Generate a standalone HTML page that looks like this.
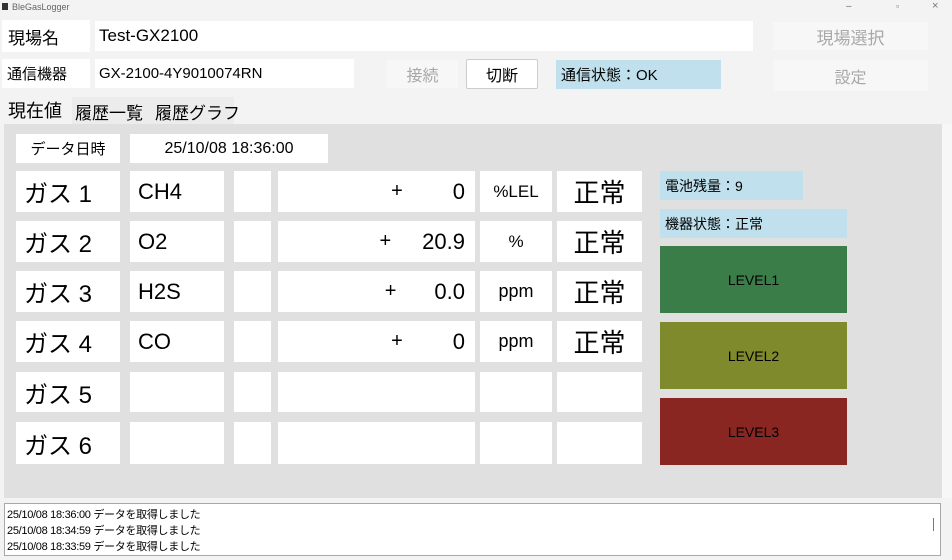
<!DOCTYPE html>
<html><head><meta charset="utf-8"><style>
*{margin:0;padding:0;box-sizing:border-box}
body{width:952px;height:560px;background:#f3f3f3;position:relative;overflow:hidden;font-family:"Liberation Sans","Noto Sans CJK JP",sans-serif;color:#000}
.a{position:absolute;display:flex;align-items:center;white-space:nowrap}
.w{background:#fff}
.c{justify-content:center}
.r{justify-content:flex-end}
.b{background:#bfe0ec}
</style></head><body>
<div class="a" style="left:0;top:0;height:13px;font-size:9px;color:#666"><span style="display:inline-block;width:6px;height:7px;background:#333;margin:0 4px 0 2px"></span>BleGasLogger</div>
<div class="a" style="left:846px;top:0;height:12px;font-size:10px;color:#777">–</div>
<div class="a" style="left:896px;top:0;height:12px;font-size:9px;color:#777">▫</div>
<div class="a" style="left:932px;top:0;height:12px;font-size:11px;color:#777">×</div>

<div class="a w" style="left:2px;top:20px;width:88px;height:32px;font-size:17px;padding-left:6px">現場名</div>
<div class="a w" style="left:95px;top:21px;width:658px;height:30px;font-size:17px;padding-left:4px">Test-GX2100</div>
<div class="a c" style="left:773px;top:22px;width:155px;height:28px;font-size:17px;color:#a8a8a8;background:#f7f7f7">現場選択</div>

<div class="a w" style="left:2px;top:59px;width:88px;height:29px;font-size:15px;padding-left:5px">通信機器</div>
<div class="a w" style="left:95px;top:59px;width:259px;height:29px;font-size:15px;padding-left:4px">GX-2100-4Y9010074RN</div>
<div class="a c" style="left:387px;top:60px;width:71px;height:28px;font-size:16px;color:#a8a8a8;background:#f7f7f7">接続</div>
<div class="a c w" style="left:466px;top:59px;width:72px;height:30px;font-size:16px;border:1px solid #ccc;border-radius:2px">切断</div>
<div class="a b" style="left:556px;top:60px;width:165px;height:29px;font-size:15px;padding-left:5px">通信状態：OK</div>
<div class="a c" style="left:773px;top:60px;width:155px;height:31px;font-size:16px;color:#a8a8a8;background:#f7f7f7">設定</div>

<div class="a" style="left:2px;top:95px;width:70px;height:30px;font-size:18px;padding-left:6px;background:#f3f3f3">現在値</div>
<div class="a" style="left:72px;top:97px;width:80px;height:28px;font-size:17px;padding-left:3px;background:#ececec">履歴一覧</div>
<div class="a" style="left:152px;top:97px;width:82px;height:28px;font-size:17px;padding-left:3px;background:#ececec">履歴グラフ</div>

<div style="position:absolute;left:4px;top:124px;width:938px;height:374px;background:#e0e0e0"></div>
<div style="position:absolute;left:942px;top:124px;width:10px;height:374px;background:#f7f7f7"></div>

<div class="a w c" style="left:16px;top:134px;width:104px;height:29px;font-size:15px">データ日時</div>
<div class="a w c" style="left:130px;top:134px;width:198px;height:29px;font-size:16px">25/10/08 18:36:00</div>

<div class="a w" style="left:16px;top:171px;width:104px;height:41px;font-size:24px;padding-left:8px">ガス 1</div>
<div class="a w" style="left:130px;top:171px;width:94px;height:41px;font-size:22px;padding-left:8px">CH4</div>
<div class="a w" style="left:234px;top:171px;width:37px;height:41px"></div>
<div class="a w r" style="left:278px;top:171px;width:197px;height:41px;font-size:22px;padding-right:10px"><span style="margin-right:50px;font-size:20px">+</span>0</div>
<div class="a w c" style="left:480px;top:171px;width:72px;height:41px;font-size:17px">%LEL</div>
<div class="a w c" style="left:557px;top:171px;width:85px;height:41px;font-size:26px">正常</div>

<div class="a w" style="left:16px;top:221px;width:104px;height:41px;font-size:24px;padding-left:8px">ガス 2</div>
<div class="a w" style="left:130px;top:221px;width:94px;height:41px;font-size:22px;padding-left:8px">O2</div>
<div class="a w" style="left:234px;top:221px;width:37px;height:41px"></div>
<div class="a w r" style="left:278px;top:221px;width:197px;height:41px;font-size:22px;padding-right:10px"><span style="margin-right:31px;font-size:20px">+</span>20.9</div>
<div class="a w c" style="left:480px;top:221px;width:72px;height:41px;font-size:17px">%</div>
<div class="a w c" style="left:557px;top:221px;width:85px;height:41px;font-size:26px">正常</div>

<div class="a w" style="left:16px;top:271px;width:104px;height:41px;font-size:24px;padding-left:8px">ガス 3</div>
<div class="a w" style="left:130px;top:271px;width:94px;height:41px;font-size:22px;padding-left:8px">H2S</div>
<div class="a w" style="left:234px;top:271px;width:37px;height:41px"></div>
<div class="a w r" style="left:278px;top:271px;width:197px;height:41px;font-size:22px;padding-right:10px"><span style="margin-right:38px;font-size:20px">+</span>0.0</div>
<div class="a w c" style="left:480px;top:271px;width:72px;height:41px;font-size:18px">ppm</div>
<div class="a w c" style="left:557px;top:271px;width:85px;height:41px;font-size:26px">正常</div>

<div class="a w" style="left:16px;top:321px;width:104px;height:41px;font-size:24px;padding-left:8px">ガス 4</div>
<div class="a w" style="left:130px;top:321px;width:94px;height:41px;font-size:22px;padding-left:8px">CO</div>
<div class="a w" style="left:234px;top:321px;width:37px;height:41px"></div>
<div class="a w r" style="left:278px;top:321px;width:197px;height:41px;font-size:22px;padding-right:10px"><span style="margin-right:50px;font-size:20px">+</span>0</div>
<div class="a w c" style="left:480px;top:321px;width:72px;height:41px;font-size:18px">ppm</div>
<div class="a w c" style="left:557px;top:321px;width:85px;height:41px;font-size:26px">正常</div>

<div class="a w" style="left:16px;top:372px;width:104px;height:40px;font-size:24px;padding-left:8px">ガス 5</div>
<div class="a w" style="left:130px;top:372px;width:94px;height:40px"></div>
<div class="a w" style="left:234px;top:372px;width:37px;height:40px"></div>
<div class="a w" style="left:278px;top:372px;width:197px;height:40px"></div>
<div class="a w" style="left:480px;top:372px;width:72px;height:40px"></div>
<div class="a w" style="left:557px;top:372px;width:85px;height:40px"></div>

<div class="a w" style="left:16px;top:422px;width:104px;height:42px;font-size:24px;padding-left:8px">ガス 6</div>
<div class="a w" style="left:130px;top:422px;width:94px;height:42px"></div>
<div class="a w" style="left:234px;top:422px;width:37px;height:42px"></div>
<div class="a w" style="left:278px;top:422px;width:197px;height:42px"></div>
<div class="a w" style="left:480px;top:422px;width:72px;height:42px"></div>
<div class="a w" style="left:557px;top:422px;width:85px;height:42px"></div>

<div class="a b" style="left:660px;top:171px;width:143px;height:29px;font-size:14px;padding-left:5px">電池残量：9</div>
<div class="a b" style="left:660px;top:209px;width:187px;height:29px;font-size:14px;padding-left:5px">機器状態：正常</div>
<div class="a c" style="left:660px;top:246px;width:187px;height:67px;font-size:14px;background:#3a7d48">LEVEL1</div>
<div class="a c" style="left:660px;top:322px;width:187px;height:67px;font-size:14px;background:#7f8a2c">LEVEL2</div>
<div class="a c" style="left:660px;top:398px;width:187px;height:67px;font-size:14px;background:#8a2621">LEVEL3</div>

<div style="position:absolute;left:4px;top:503px;width:937px;height:53px;background:#fff;border:1px solid #a8a8a8;font-size:11px;line-height:16px;padding:3px 0 0 2px;letter-spacing:-0.3px">
25/10/08 18:36:00 データを取得しました<br>25/10/08 18:34:59 データを取得しました<br>25/10/08 18:33:59 データを取得しました
<div style="position:absolute;right:6px;top:14px;width:1px;height:13px;background:#777"></div>
</div>
</body></html>
